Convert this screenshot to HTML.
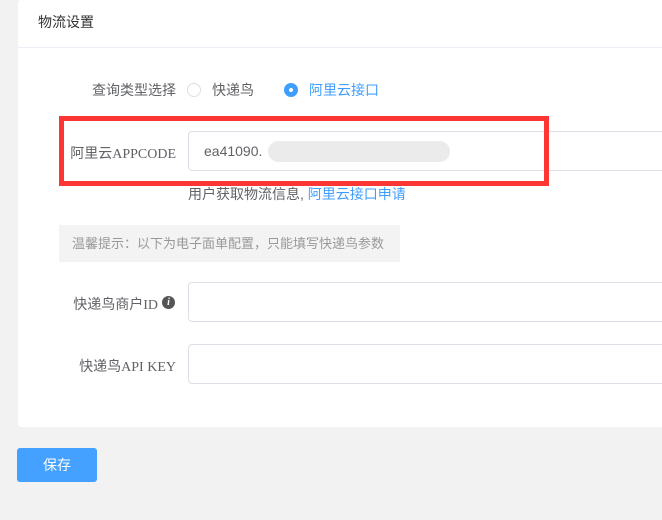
<!DOCTYPE html>
<html><head><meta charset="utf-8"><style>
*{box-sizing:border-box;margin:0;padding:0}
body{width:662px;height:520px;background:#f2f2f3;font-family:"Liberation Sans","Noto Sans CJK SC",sans-serif;font-size:14px;color:#606266;position:relative;overflow:hidden}
.card{position:absolute;left:18px;top:0;width:660px;height:427px;background:#fff;border-radius:3px}
.hd{height:48px;border-bottom:1px solid #ebeef5;padding-left:20px;line-height:44px;color:#303133;font-size:14px}
.abs{position:absolute}
.lbl{position:absolute;text-align:right;width:160px;left:16px;font-family:"Liberation Serif","Noto Sans CJK SC",serif;color:#606266}
.inp{position:absolute;left:188px;width:490px;height:40px;border:1px solid #dcdfe6;border-radius:4px;background:#fff}
.radio{position:absolute;width:14px;height:14px;border-radius:50%;border:1px solid #dcdfe6}
.radio.on{background:#409eff;border-color:#409eff}
.radio.on::after{content:"";position:absolute;left:4px;top:4px;width:4px;height:4px;border-radius:50%;background:#fff}
</style></head><body>
<div class="card"><div class="hd">物流设置</div></div>
<div class="abs" style="left:92px;top:80px">查询类型选择</div>
<div class="radio" style="left:187px;top:83px"></div>
<div class="abs" style="left:212px;top:80px">快递鸟</div>
<div class="radio on" style="left:284px;top:83px"></div>
<div class="abs" style="left:309px;top:80px;color:#409eff">阿里云接口</div>
<div class="inp" style="top:131px"></div>
<div class="abs" style="left:204px;top:143px;color:#606266">ea41090.</div>
<div class="abs" style="left:268px;top:141px;width:182px;height:21px;border-radius:11px;background:#ebebeb"></div>
<div class="lbl" style="top:143px">阿里云APPCODE</div>
<div class="abs" style="left:59px;top:116px;width:490px;height:70px;border:5px solid #fc3535"></div>
<div class="abs" style="left:188px;top:184px;font-size:14px">用户获取物流信息, <span style="color:#409eff">阿里云接口申请</span></div>
<div class="abs" style="left:59px;top:225px;width:341px;height:37px;background:#f3f3f4;color:#999;font-size:13px;line-height:37px;padding-left:13px">温馨提示：以下为电子面单配置，只能填写快递鸟参数</div>
<div class="inp" style="top:282px"></div>
<div class="lbl" style="top:294px;left:0;width:158px">快递鸟商户ID</div>
<div class="abs" style="left:162px;top:296px;width:13px;height:13px;border-radius:50%;background:#555;color:#fff;font-size:10px;font-style:italic;font-weight:bold;text-align:center;line-height:13px;font-family:'Liberation Serif',serif">i</div>
<div class="inp" style="top:344px"></div>
<div class="lbl" style="top:356px">快递鸟API KEY</div>
<div class="abs" style="left:17px;top:448px;width:80px;height:34px;background:#44a1ff;border-radius:3px;color:#fff;text-align:center;line-height:34px">保存</div>
</body></html>
